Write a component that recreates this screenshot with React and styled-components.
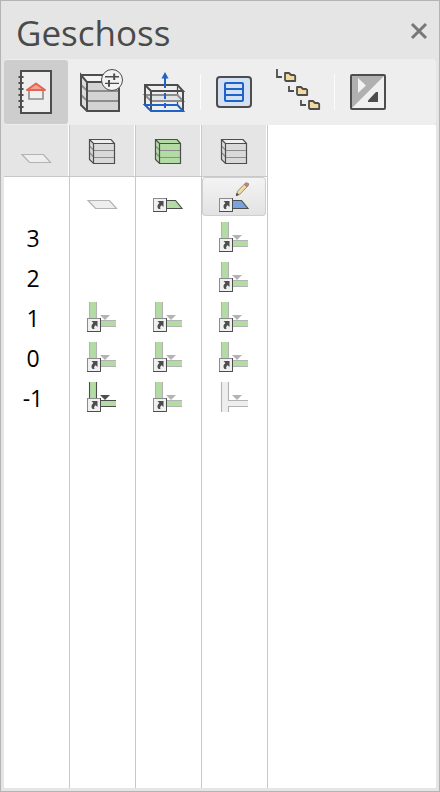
import React from "react";
import styled, { createGlobalStyle, css } from "styled-components";

const GlobalStyle = createGlobalStyle`
  * { box-sizing: border-box; }
  body {
    margin: 0;
    background: #e5e5e5;
    font-family: "Noto Sans", "Open Sans", sans-serif;
  }
  svg { display: block; }
`;

const dark = "#4d4d4d";
const mid = "#8c8c8c";
const pale = "#b3b3b3";
const blue = "#1f62c9";
const green = "#b2dca3";

const Palette = styled.main`
  display: flex;
  flex-direction: column;
  height: 100vh;
  padding: 0 3px 3px;
  border: 1px solid #b4b4b4;
  background: #e5e5e5;
`;

const TitleBar = styled.header`
  display: flex;
  align-items: center;
  justify-content: space-between;
  flex: none;
  height: 58px;
  padding: 4px 5px 0 12px;
`;

const Title = styled.h1`
  margin: 0;
  padding-top: 2px;
  color: #4a4a4a;
  font-family: "Open Sans", "Noto Sans", sans-serif;
  font-size: 35px;
  font-weight: 400;
  line-height: 48px;
`;

const plainButton = css`
  display: flex;
  align-items: center;
  justify-content: center;
  margin: 0;
  padding: 0;
  border: 0;
  background: transparent;
  cursor: pointer;
`;

const CloseButton = styled.button`
  ${plainButton}
  width: 24px;
  height: 24px;
`;

const Toolbar = styled.div`
  display: flex;
  flex: none;
  height: 66px;
  padding: 1px 0;
  border-radius: 4px;
  background: #eeeeee;
`;

const ToolButton = styled.button`
  ${plainButton}
  width: 64px;
  height: 64px;
  border-radius: 3px;
  background: ${(p) => (p.$active ? "#cdcdcd" : "transparent")};
`;

const Divider = styled.span`
  width: 6px;
  height: 36px;
  margin: 14px 0;
  padding-left: 4px;
  background: #fcfcfc content-box;
  border-right: 1px solid transparent;
`;

const Matrix = styled.div`
  flex: 1;
  min-height: 0;
  background: #ffffff;
`;

const Grid = styled.table`
  width: 100%;
  height: 100%;
  border-spacing: 0;
  table-layout: fixed;
`;

const StoryColumn = styled.col`
  width: 66px;
`;

const cell = css`
  padding: 0 1px 0 0;
  border-right: ${(p) => (p.$open ? "0" : "1px solid #c8c8c8")};
`;

const HeadCell = styled.th`
  ${cell}
  height: 52px;
  border-bottom: ${(p) => (p.$open ? "0" : "1px solid #c8c8c8")};
  background: ${(p) => (p.$open ? "#ffffff" : "#e5e5e5 content-box")};
`;

const Cell = styled.td`
  ${cell}
  height: ${(p) => (p.$filler ? "auto" : p.$tall ? "41px" : "40px")};
  vertical-align: top;
`;

const LevelCell = styled.th`
  ${cell}
  height: 40px;
  padding-right: 7px;
  color: #000000;
  font-family: "Open Sans", "Noto Sans", sans-serif;
  font-size: 23px;
  font-weight: 400;
  line-height: 40px;
  text-align: center;
`;

const CellButton = styled.button`
  ${plainButton}
  width: 100%;
  height: ${(p) => (p.$head ? "51px" : "40px")};
`;

const SelectedButton = styled(CellButton)`
  height: 39px;
  border-radius: 4px;
  background: linear-gradient(#f4f4f4, #e2e2e2);
  box-shadow: inset 0 0 0 1px #cfcfcf;
`;

function CloseIcon() {
  return (
    <svg width="24" height="24" viewBox="0 0 24 24" aria-hidden="true">
      <path d="M5 4L19 18M19 4L5 18" stroke="#777777" strokeWidth="3" />
    </svg>
  );
}

function NotebookIcon() {
  return (
    <svg width="64" height="64" viewBox="0 0 64 64" fill="none" aria-hidden="true">
      <rect x="17" y="11" width="30" height="42" fill="#eeeeee" stroke={dark} strokeWidth="2" />
      <path d="M14.5 17h5M14.5 23h5M14.5 29h5M14.5 35h5M14.5 41h5M14.5 47h5" stroke={dark} strokeWidth="2" />
      <path d="M25 31V39H39V31" fill="#f0f0f0" stroke={mid} strokeWidth="1.6" />
      <path d="M23 30L32 23.5L41 30Z" fill="#f2a198" stroke="#e56450" strokeWidth="2" strokeLinejoin="round" />
    </svg>
  );
}

function BuildingSettingsIcon() {
  return (
    <svg width="64" height="64" viewBox="0 0 64 64" fill="none" aria-hidden="true">
      <path d="M13 15H46L51 21.5H19.5Z" fill="#f2f2f2" />
      <path d="M13 15L19.5 21.5V51L13 45Z" fill="#dcdcdc" />
      <path d="M19.5 21.5H51V51H19.5Z" fill="#d3d3d3" />
      <path d="M13 25L19.5 31H51M13 35L19.5 41H51" stroke={mid} strokeWidth="2" />
      <path d="M19 22H51V51H19L13 45V15L19 22V51M13 15H46" stroke={dark} strokeWidth="2" />
      <circle cx="44" cy="20" r="10.5" fill="#f2f2f2" stroke={dark} strokeWidth="1" />
      <path d="M37 16.7H51M37 23.4H51" stroke={dark} strokeWidth="1.4" />
      <path d="M46.2 13.5V20M41 20V26.8" stroke={dark} strokeWidth="2" />
    </svg>
  );
}

function StoriesUpIcon() {
  return (
    <svg width="64" height="64" viewBox="0 0 64 64" fill="none" aria-hidden="true">
      <path d="M45.5 25V45" stroke={dark} strokeWidth="1.2" />
      <path d="M13 35H45.5L51 41H19Z" fill="#e2e2e2" stroke={mid} strokeWidth="2" />
      <path d="M33 33V39" stroke={blue} strokeWidth="2" />
      <path d="M13 46V25H45.5L51 31H19V51M13 25L19 31M51 31V51" stroke={dark} strokeWidth="2" />
      <path d="M13 45H45.5L51 51H19Z" stroke={blue} strokeWidth="2" />
      <path d="M33 43V48" stroke={blue} strokeWidth="2" />
      <path d="M33 17V28" stroke={blue} strokeWidth="2" />
      <path d="M29.5 18.5L33 12L36.5 18.5Z" fill={blue} />
    </svg>
  );
}

function LayoutIcon() {
  return (
    <svg width="64" height="64" viewBox="0 0 64 64" fill="none" aria-hidden="true">
      <rect x="15" y="17" width="34" height="30" rx="3" fill="#d3e1f2" stroke={dark} strokeWidth="2" />
      <rect x="23" y="23" width="18" height="18" rx="1" stroke={blue} strokeWidth="2" />
      <path d="M23 29H41M23 35H41" stroke={blue} strokeWidth="2" />
    </svg>
  );
}

function FolderTreeIcon() {
  return (
    <svg width="64" height="64" viewBox="0 0 64 64" fill="none" stroke={dark} aria-hidden="true">
      <path d="M11 9V17H16M23 26V31H28M35 40V45H40" strokeWidth="1.8" />
      <g fill="#f1d9a0" strokeWidth="1.8" strokeLinejoin="round">
        <path d="M19 13H23L25 15H28L29.2 16V21H20L19 20Z" />
        <path d="M31 27H35L37 29H40L41.2 30V35H32L31 34Z" />
        <path d="M43 41H47L49 43H52L53.2 44V49H44L43 48Z" />
      </g>
    </svg>
  );
}

function ContrastIcon() {
  return (
    <svg width="64" height="64" viewBox="0 0 64 64" fill="none" aria-hidden="true">
      <rect x="15" y="15" width="34" height="34" fill="#f0f0f0" />
      <path d="M15 15H49L15 49Z" fill="#b0b0b0" />
      <rect x="15" y="15" width="34" height="34" rx="1" stroke={dark} strokeWidth="2" />
      <path d="M22 18L30 25.5L22 33Z" fill="#f2f2f2" />
      <path d="M32 42V40.5L40 32H42V42Z" fill={dark} />
    </svg>
  );
}

function BuildingIcon({ tint = "#d9d9d9", top = "#eeeeee" }) {
  return (
    <svg width="32" height="32" viewBox="0 0 32 32" fill="none" aria-hidden="true">
      <path d="M4 4.5H26L29 9H8Z" fill={top} />
      <path d="M4 4.5L8 9V29L4 25Z" fill={tint} />
      <path d="M8 9H29V29H8Z" fill={tint} />
      <path d="M4 11.5L8 15.5H29M4 18L8 22.5H29" stroke={mid} strokeWidth="1.2" />
      <path d="M7.5 8.5H28.5V28.5H7.5L3.5 24.5V4.5H25L28.5 8.5M3.5 4.5L7.5 8.5V28.5" stroke={dark} strokeWidth="1.2" />
    </svg>
  );
}

function SlabIcon() {
  return (
    <svg width="32" height="32" viewBox="0 0 32 32" aria-hidden="true">
      <path d="M2 19.5H23.5L30.5 27.5H9.5Z" fill="#eeeeee" stroke={pale} strokeWidth="1.2" />
    </svg>
  );
}

function LinkBadge({ y }) {
  return (
    <g transform={`translate(1 ${y})`}>
      <rect x="0.5" y="0.5" width="13" height="13" fill="#f0f0f0" stroke={mid} />
      <path d="M13.5 0V13.5H0" fill="none" stroke={dark} strokeWidth="1" />
      <path d="M4.5 3H10.5V9L8.7 7.2C7.2 8.2 6.8 9.3 7.5 11H5.5C3.8 8.8 4.2 6.8 6.4 5Z" fill={dark} />
    </g>
  );
}

function LinkedSlabIcon({ tint, editing }) {
  return (
    <svg width="32" height="32" viewBox="0 0 32 32" aria-hidden="true">
      <path d="M12 19.5H23.5L30 27.5H12Z" fill={tint} stroke={dark} strokeWidth="1.1" />
      <LinkBadge y={17} />
      {editing && (
        <g strokeWidth="0.8" strokeLinejoin="round">
          <path d="M18.4 14.4L19.5 10.3L26.2 3.3L29 5.8L22.3 12.9Z" fill="#f1d9a0" stroke="#8a7a60" />
          <path d="M26.2 3.3L27.8 1.8L30.4 2.4L30.6 4.3L29 5.8Z" fill="#e2786c" stroke="#8c7772" />
          <path d="M18.2 14.6L18.9 12.3L20.5 13.8Z" fill={dark} stroke={dark} />
        </g>
      )}
    </svg>
  );
}

function WallIcon({ strong, empty }) {
  const line = strong ? dark : pale;
  const fill = empty ? "#eeeeee" : green;
  return (
    <svg width="32" height="32" viewBox="0 0 32 32" fill="none" aria-hidden="true">
      <path d="M4 0H10V30H4ZM10 19H30V24H10Z" fill={fill} />
      <path d="M3.5 0V30M10.5 0V18.5H30M30 24.5H10.5V30" stroke={line} strokeWidth="1.1" />
      <path d="M14 13H24L19 18Z" fill={line} />
      {!empty && <path d="M1 30H15V31H1Z" fill="#ffffff" />}
      {!empty && <LinkBadge y={16} />}
    </svg>
  );
}

const heads = [
  { label: "Geschossebene", icon: <SlabIcon /> },
  { label: "Gebäude 1", icon: <BuildingIcon /> },
  { label: "Gebäude 2", icon: <BuildingIcon tint={green} top={green} /> },
  { label: "Gebäude 3", icon: <BuildingIcon /> },
];

const levels = [
  { name: "3", states: [null, null, "linked"] },
  { name: "2", states: [null, null, "linked"] },
  { name: "1", states: ["linked", "linked", "linked"] },
  { name: "0", states: ["linked", "linked", "linked"] },
  { name: "-1", states: ["strong", "linked", "empty"] },
];

export default function App() {
  return (
    <>
      <GlobalStyle />
      <Palette>
        <TitleBar>
          <Title>Geschoss</Title>
          <CloseButton type="button" aria-label="Schließen"><CloseIcon /></CloseButton>
        </TitleBar>
        <Toolbar role="toolbar" aria-label="Geschoss">
          <ToolButton type="button" $active aria-label="Projekt"><NotebookIcon /></ToolButton>
          <ToolButton type="button" aria-label="Gebäudeeinstellungen"><BuildingSettingsIcon /></ToolButton>
          <ToolButton type="button" aria-label="Geschosse anordnen"><StoriesUpIcon /></ToolButton>
          <Divider />
          <ToolButton type="button" aria-label="Layout"><LayoutIcon /></ToolButton>
          <ToolButton type="button" aria-label="Struktur"><FolderTreeIcon /></ToolButton>
          <Divider />
          <ToolButton type="button" aria-label="Umkehren"><ContrastIcon /></ToolButton>
        </Toolbar>
        <Matrix>
          <Grid>
            <colgroup>
              <StoryColumn />
              <StoryColumn />
              <StoryColumn />
              <StoryColumn />
              <col />
            </colgroup>
            <thead>
              <tr>
                {heads.map((head) => (
                  <HeadCell key={head.label} scope="col">
                    <CellButton type="button" $head aria-label={head.label}>{head.icon}</CellButton>
                  </HeadCell>
                ))}
                <HeadCell as="td" $open />
              </tr>
            </thead>
            <tbody>
              <tr>
                <Cell $tall />
                <Cell $tall><CellButton type="button" aria-label="Ebene 1"><SlabIcon /></CellButton></Cell>
                <Cell $tall>
                  <CellButton type="button" aria-label="Ebene 2"><LinkedSlabIcon tint={green} /></CellButton>
                </Cell>
                <Cell $tall>
                  <SelectedButton type="button" aria-label="Ebene 3" aria-pressed="true">
                    <LinkedSlabIcon tint="#7aa2de" editing />
                  </SelectedButton>
                </Cell>
                <Cell $open />
              </tr>
              {levels.map((level) => (
                <tr key={level.name}>
                  <LevelCell scope="row">{level.name}</LevelCell>
                  {level.states.map((state, i) => (
                    <Cell key={i}>
                      {state && (
                        <CellButton type="button" aria-label={`Geschoss ${level.name}, Gebäude ${i + 1}`}>
                          <WallIcon strong={state === "strong"} empty={state === "empty"} />
                        </CellButton>
                      )}
                    </Cell>
                  ))}
                  <Cell $open />
                </tr>
              ))}
              <tr>
                <Cell $filler />
                <Cell $filler />
                <Cell $filler />
                <Cell $filler />
                <Cell $filler $open />
              </tr>
            </tbody>
          </Grid>
        </Matrix>
      </Palette>
    </>
  );
}
